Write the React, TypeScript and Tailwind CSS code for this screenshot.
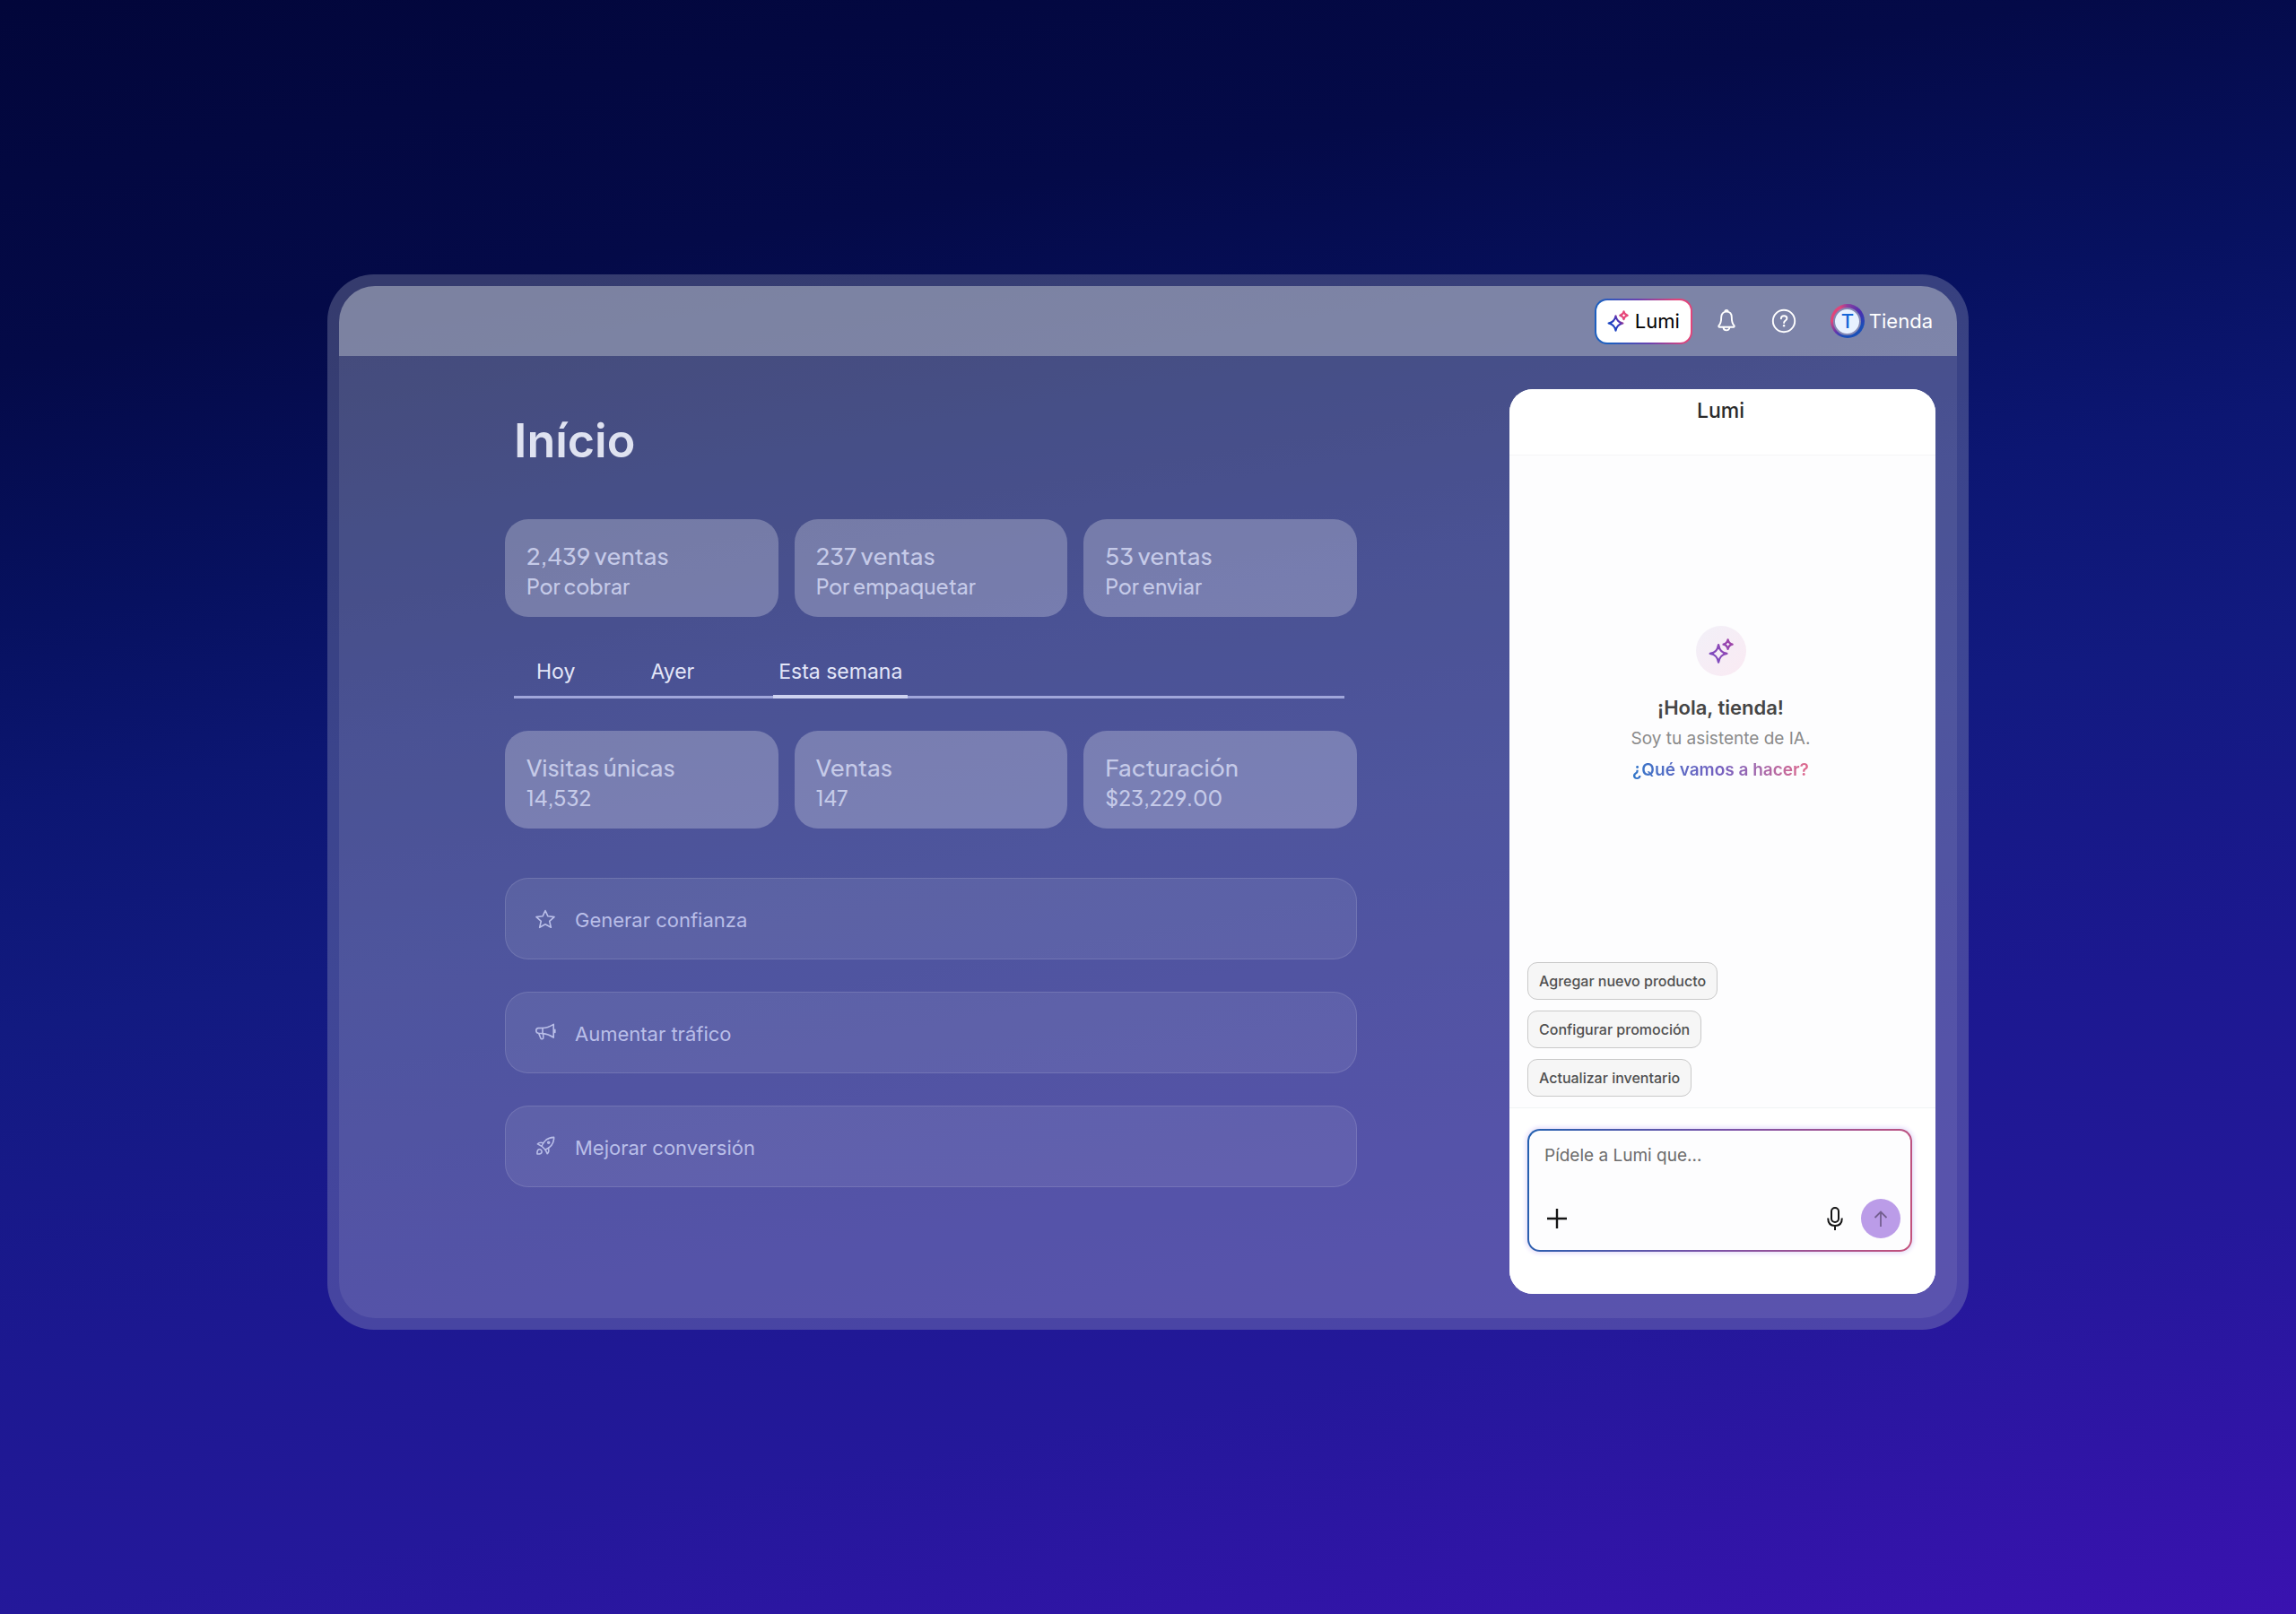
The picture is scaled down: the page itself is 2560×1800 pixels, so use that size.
import React from "react";

const stats = [
  { value: "2,439 ventas", label: "Por cobrar" },
  { value: "237 ventas", label: "Por empaquetar" },
  { value: "53 ventas", label: "Por enviar" },
];

const metrics = [
  { value: "Visitas únicas", label: "14,532" },
  { value: "Ventas", label: "147" },
  { value: "Facturación", label: "$23,229.00" },
];

const suggestions = [
  "Agregar nuevo producto",
  "Configurar promoción",
  "Actualizar inventario",
];

const SparkleIcon = ({
  className,
  id,
  stops,
}: {
  className: string;
  id: string;
  stops: string[];
}) => (
  <svg viewBox="0 0 24 24" fill="none" className={className} aria-hidden="true">
    <defs>
      <linearGradient id={id} x1="1" y1="20" x2="23" y2="4" gradientUnits="userSpaceOnUse">
        {stops.map((color, i) => (
          <stop key={i} offset={i / (stops.length - 1)} stopColor={color} />
        ))}
      </linearGradient>
    </defs>
    <g stroke={`url(#${id})`} strokeWidth="2" strokeLinejoin="round">
      <path d="M9.500 6.200c.9 5 2.800 7.300 8 8.300-5.200 1-7.100 3.300-8 8.300-.9-5-2.800-7.300-8-8.300 5.200-1 7.100-3.300 8-8.300Z" />
      <path d="M18.500 1.200c.5 2.700 1.500 3.900 4.300 4.500-2.800.6-3.800 1.800-4.300 4.500-.5-2.700-1.500-3.900-4.300-4.500 2.800-.6 3.800-1.800 4.300-4.500Z" />
    </g>
  </svg>
);

const BellIcon = () => (
  <svg viewBox="0 0 20 28" fill="none" stroke="white" strokeWidth="1.900" strokeLinejoin="round" className="h-7 w-5" aria-hidden="true">
    <path d="M10 3.600c3.700 0 5.800 2.600 5.800 6.200 0 4.600.5 7.100 2.700 9.300.5.600.2 1.600-.7 1.600H2.200c-.9 0-1.200-1-.7-1.600 2.200-2.200 2.700-4.700 2.700-9.300C4.200 6.200 6.300 3.600 10 3.600Z" />
    <path d="M8.300 3.600c0-2.300 3.400-2.300 3.400 0M6.600 21c0 4.500 6.800 4.500 6.800 0" />
  </svg>
);

const HelpIcon = () => (
  <svg viewBox="0 0 28 28" fill="none" stroke="white" strokeWidth="1.900" strokeLinecap="round" className="size-7" aria-hidden="true">
    <circle cx="14" cy="14" r="12.200" />
    <path d="M10.800 11.400c.1-2 1.500-3.100 3.300-3.100 1.900 0 3.300 1.100 3.300 2.800 0 2.500-3.300 2.400-3.300 4.900" />
    <circle cx="14.100" cy="19.300" r="1.200" fill="white" stroke="none" />
  </svg>
);

const StarIcon = () => (
  <svg viewBox="0 0 24 24" fill="none" stroke="currentColor" strokeWidth="1.600" strokeLinejoin="round" className="size-6" aria-hidden="true">
    <path d="m12 2.500 2.900 6.300 7.100.8-5.300 4.700 1.600 7-6.300-3.500-6.300 3.500 1.600-7L2 9.600l7.100-.8L12 2.500Z" />
  </svg>
);

const MegaphoneIcon = () => (
  <svg viewBox="0 0 24 24" fill="none" stroke="currentColor" strokeWidth="1.600" strokeLinejoin="round" strokeLinecap="round" className="size-6" aria-hidden="true">
    <path d="M3.800 6.600 9 6.500c4.400-.1 8.300-1.700 12.200-4.200v14.900c-3.700-2.700-7.700-4.300-12.200-4.600l-4.700-.3c-3.200-.5-3.300-5.200-.5-5.700Z" />
    <path d="M9 6.500v6.100M22.800 8.400v3M4.800 12.600l2 5.200c.6 1.600 3.100 1.200 3-.7l-.2-4.300" />
  </svg>
);

const RocketIcon = () => (
  <svg viewBox="0 0 24 24" fill="none" stroke="currentColor" strokeWidth="1.600" strokeLinejoin="round" strokeLinecap="round" className="size-6" aria-hidden="true">
    <path d="M8 11.200c2.400-6 6.600-9.600 13.600-9.800.1 6.900-3.600 11.300-9.600 13.800l-4-4Z" />
    <path d="M9.700 7.700c-2.600-.9-4.700-.5-6.300 1.200l4.600 2.300M15.400 13.400c.9 2.600.5 4.700-1.200 6.300L12 15.200" />
    <path d="M3 20c-.2-2.600.2-4.500 1.600-5.100 2-.8 4.100 1.300 3.400 3.300C7.500 19.700 5.600 20.200 3 20Z" />
    <circle cx="15.700" cy="7.200" r="1" />
  </svg>
);

const actions = [
  { name: "Generar confianza", icon: <StarIcon /> },
  { name: "Aumentar tráfico", icon: <MegaphoneIcon /> },
  { name: "Mejorar conversión", icon: <RocketIcon /> },
];

const StatCards = ({ items }: { items: { value: string; label: string }[] }) => (
  <div className="grid grid-cols-3 gap-[18px]">
    {items.map((item) => (
      <div
        key={item.value}
        className="flex h-[109px] flex-col justify-center rounded-[26px] bg-white/25 px-6 pt-1 font-['Plus_Jakarta_Sans','Inter',sans-serif] font-medium text-[#c5cae8]"
      >
        <p className="text-[26px] leading-9">{item.value}</p>
        <p className="text-[23px] leading-8">{item.label}</p>
      </div>
    ))}
  </div>
);

const TopBar = () => (
  <header className="flex h-[78px] items-center justify-end bg-[#b3b9c8]/50 pr-[27px]">
    <button
      type="button"
      className="flex h-[51px] items-center gap-[7px] rounded-[14px] border-2 border-transparent px-3 text-[22px] text-black [background:linear-gradient(#fff,#fff)_padding-box,linear-gradient(75deg,#1d5fc0_15%,#6a43b0_50%,#e0457b_85%)_border-box]"
    >
      <SparkleIcon id="sparkle-nav" className="size-6" stops={["#1a50c8", "#2040c0", "#4a35b8", "#e8487a", "#e8487a"]} />
      Lumi
    </button>
    <button type="button" aria-label="Notificaciones" className="ml-7">
      <BellIcon />
    </button>
    <button type="button" aria-label="Ayuda" className="ml-10">
      <HelpIcon />
    </button>
    <a href="#tienda" className="ml-[38px] flex items-center gap-[5px] text-[22px] text-white">
      <span className="flex size-[38px] items-center justify-center rounded-full bg-[conic-gradient(from_0deg,#8a3fa0,#4a2db0_15%,#1a4fb8_30%,#1a4fb8_55%,#5a35b0_62%,#e0457b_75%,#e0457b_92%,#8a3fa0)]">
        <span className="flex size-[31px] items-center justify-center rounded-full border-2 border-[#8488b4] bg-[#e8f1ff] text-[22px] font-medium text-[#1766d8]">
          T
        </span>
      </span>
      Tienda
    </a>
  </header>
);

const Dashboard = () => (
  <main className="w-[950px] shrink-0">
    <h1 className="mb-[55px] pt-[26px] pl-[10px] text-[52px] leading-[64px] font-semibold text-[#dfe2f0]">
      Início
    </h1>
    <StatCards items={stats} />
    <nav className="mt-9 mr-[14px] mb-9 ml-[10px] flex h-[55px] items-end border-b-3 border-[#a0a6da] text-[23px] text-[#e3e6f8]">
      <button type="button" className="mr-[60px] h-[53px] pr-3 pl-[25px]">
        Hoy
      </button>
      <button type="button" className="mr-[76px] h-[53px] px-3">
        Ayer
      </button>
      <button type="button" className="-mb-[3px] h-[56px] border-b-4 border-[#cdd2f0] px-[6px]">
        Esta semana
      </button>
    </nav>
    <StatCards items={metrics} />
    <ul className="mt-[55px] flex flex-col gap-9">
      {actions.map((action) => (
        <li key={action.name}>
          <button
            type="button"
            className="flex h-[91px] w-full items-center gap-[21px] rounded-[26px] border border-white/12 bg-white/8 pl-[32px] text-[22px] text-[#b9bee8]"
          >
            {action.icon}
            <span className="pt-1">{action.name}</span>
          </button>
        </li>
      ))}
    </ul>
  </main>
);

const ChatPanel = () => (
  <aside className="flex h-[1009px] w-[475px] shrink-0 flex-col overflow-hidden rounded-[26px] bg-[#fdfdfe]">
    <h2 className="h-[74px] border-b border-[#f5f5f7] bg-white pt-1 pr-1 text-center text-[23px] leading-10 font-medium text-[#2b2b2b]">
      Lumi
    </h2>
    <div className="flex flex-1 flex-col items-center pt-[190px] pr-1">
      <div className="mb-[14px] flex size-[56px] items-center justify-center rounded-full bg-linear-to-br from-[#f2f0f8] to-[#faeaf3]">
        <SparkleIcon id="sparkle-hero" className="size-7" stops={["#7a4cc0", "#8a48b8", "#a045a8"]} />
      </div>
      <p className="text-[22px] leading-[42px] font-semibold text-[#454545]">¡Hola, tienda!</p>
      <p className="text-[19px] leading-7 text-[#8a8a8a]">Soy tu asistente de IA.</p>
      <p className="bg-linear-to-r from-[#2f75c8] via-[#7560c0] to-[#e0688c] bg-clip-text text-[19px] leading-[42px] font-semibold text-transparent">
        ¿Qué vamos a hacer?
      </p>
    </div>
    <div className="flex flex-col items-start gap-3 px-5 pb-3">
      {suggestions.map((text) => (
        <button
          key={text}
          type="button"
          className="h-[42px] rounded-[11px] border border-[#c9c9c9] bg-[#f6f6f6] px-3 text-[16px] font-medium text-[#505050]"
        >
          {text}
        </button>
      ))}
    </div>
    <div className="border-t border-[#f1f4f5] bg-white pt-[23px] pr-[26px] pb-[47px] pl-5">
      <form className="flex h-[137px] flex-col justify-between rounded-[14px] border-2 border-transparent pt-[10px] pr-[11px] pb-[13px] pl-[17px] shadow-[0_0_5px_2px_#e6defa] [background:linear-gradient(#fdfdfe,#fdfdfe)_padding-box,linear-gradient(100deg,#2360b0,#7b52a8_50%,#c4527c)_border-box]">
        <textarea
          aria-label="Mensaje para Lumi"
          placeholder="Pídele a Lumi que…"
          className="h-9 resize-none text-[19px] leading-9 text-[#333] outline-none placeholder:text-[#6c6c6c]"
        />
        <div className="flex items-center">
          <button type="button" aria-label="Adjuntar" className="mr-auto">
            <svg viewBox="0 0 28 28" fill="none" stroke="#161616" strokeWidth="2.400" className="size-7" aria-hidden="true">
              <path d="M14 3v22M3 14h22" />
            </svg>
          </button>
          <button type="button" aria-label="Dictar" className="mr-5">
            <svg viewBox="0 0 18 28" fill="none" stroke="#161616" strokeWidth="2" className="h-7 w-[18px]" aria-hidden="true">
              <rect x="5" y="2" width="8" height="16" rx="4" />
              <path d="M1.200 13.500c0 5.500 3 8.500 7.800 8.500s7.800-3 7.800-8.500M9 22v5" />
            </svg>
          </button>
          <button type="button" aria-label="Enviar" className="flex size-11 items-center justify-center rounded-full bg-[#bb9ce8]">
            <svg viewBox="0 0 20 20" fill="none" stroke="#745f90" strokeWidth="1.800" className="size-5" aria-hidden="true">
              <path d="M10 19V2.500M3.500 9 10 2.500 16.500 9" />
            </svg>
          </button>
        </div>
      </form>
    </div>
  </aside>
);

export default function App() {
  return (
    <div className="min-h-screen bg-[linear-gradient(170deg,#02063a_0%,#040a48_18%,#071160_31%,#0c1672_40%,#121a80_51%,#1c1890_67%,#24189a_80%,#3a12b0_100%)] px-[365px] pt-[306px] pb-[318px] font-['Inter',sans-serif]">
      <div className="rounded-[52px] bg-[#a8aec8]/30 p-[13px]">
        <div className="overflow-hidden rounded-[40px] bg-white/8">
          <TopBar />
          <div className="flex items-start justify-between pt-[37px] pr-6 pb-[27px] pl-[185px]">
            <Dashboard />
            <ChatPanel />
          </div>
        </div>
      </div>
    </div>
  );
}
